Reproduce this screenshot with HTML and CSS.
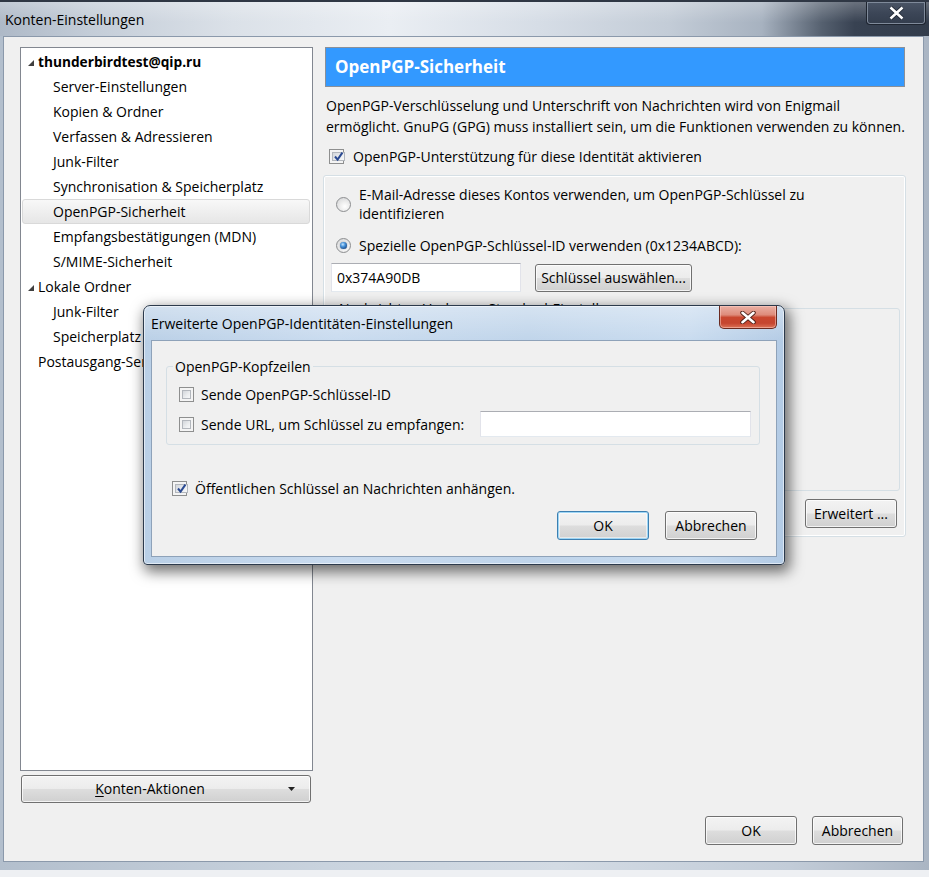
FILE: index.html
```html
<!DOCTYPE html>
<html lang="de">
<head>
<meta charset="utf-8">
<title>Konten-Einstellungen</title>
<link rel="stylesheet" href="styles.css">
</head>
<body>
<div class="win">
  <div class="titlebar">
    <span class="wtitle">Konten-Einstellungen</span>
    <div class="wclose">
      <svg width="17" height="14" viewBox="0 0 17 14"><path d="M2.5 1.5 L14.5 12.5 M14.5 1.5 L2.5 12.5" stroke="#1d2430" stroke-width="4.2"/><path d="M2.5 1.5 L14.5 12.5 M14.5 1.5 L2.5 12.5" stroke="#ffffff" stroke-width="2.6"/></svg>
    </div>
  </div>
  <div class="client">
    <div class="cols">
      <div class="leftcol">
        <div class="tree">
          <div class="row lvl0"><span class="twisty"><svg width="6" height="6" viewBox="0 0 6 6"><polygon points="6,0 6,6 0,6" fill="#3f3f3f"/></svg></span><b>thunderbirdtest@qip.ru</b></div>
          <div class="row lvl1">Server-Einstellungen</div>
          <div class="row lvl1">Kopien &amp; Ordner</div>
          <div class="row lvl1">Verfassen &amp; Adressieren</div>
          <div class="row lvl1">Junk-Filter</div>
          <div class="row lvl1">Synchronisation &amp; Speicherplatz</div>
          <div class="row lvl1 sel">OpenPGP-Sicherheit</div>
          <div class="row lvl1">Empfangsbestätigungen (MDN)</div>
          <div class="row lvl1">S/MIME-Sicherheit</div>
          <div class="row lvl0"><span class="twisty"><svg width="6" height="6" viewBox="0 0 6 6"><polygon points="6,0 6,6 0,6" fill="#3f3f3f"/></svg></span>Lokale Ordner</div>
          <div class="row lvl1">Junk-Filter</div>
          <div class="row lvl1">Speicherplatz</div>
          <div class="row lvl0 leaf">Postausgang-Server (SMTP)</div>
        </div>
        <button class="btn actions"><span class="lbl"><u>K</u>onten-Aktionen</span><span class="drop"><svg width="7" height="4" viewBox="0 0 7 4"><polygon points="0,0 7,0 3.5,4" fill="#222"/></svg></span></button>
      </div>
      <div class="rightcol">
        <div class="header">OpenPGP-Sicherheit</div>
        <p class="desc">OpenPGP-Verschlüsselung und Unterschrift von Nachrichten wird von Enigmail<br>ermöglicht. GnuPG (GPG) muss installiert sein, um die Funktionen verwenden zu können.</p>
        <div class="cbrow main-cb"><span class="cb"><span class="cbi"><svg width="11" height="11" viewBox="0 0 11 11"><path d="M2 5.5 L4.6 8.6 L9.4 1.6" fill="none" stroke="#2b4a92" stroke-width="2"/></svg></span></span><span>OpenPGP-Unterstützung für diese Identität aktivieren</span></div>
        <div class="group">
          <div class="radiorow"><span class="radio"></span><span class="rtext">E-Mail-Adresse dieses Kontos verwenden, um OpenPGP-Schlüssel zu<br>identifizieren</span></div>
          <div class="radiorow second"><span class="radio on"></span><span class="rtext">Spezielle OpenPGP-Schlüssel-ID verwenden (0x1234ABCD):</span></div>
          <div class="keyrow">
            <div class="input keyid">0x374A90DB</div>
            <button class="btn pick">Schlüssel auswählen...</button>
          </div>
          <fieldset class="gbox sub">
            <legend>Nachrichten-Vorlagen: Standard-Einstellungen</legend>
          </fieldset>
          <div class="advrow"><button class="btn adv">Erweitert ...</button></div>
        </div>
      </div>
    </div>
    <div class="footer">
      <button class="btn fbtn ok">OK</button>
      <button class="btn fbtn cancel">Abbrechen</button>
    </div>
  </div>

  <div class="dialog">
    <div class="dtitle">
      <span class="dtitle-text">Erweiterte OpenPGP-Identitäten-Einstellungen</span>
      <div class="dclose">
        <svg width="18" height="13" viewBox="0 0 18 13"><path d="M3.5 1.8 L14.5 11.2 M14.5 1.8 L3.5 11.2" stroke="#4a1c14" stroke-width="4.4" stroke-linecap="round"/><path d="M3.5 1.8 L14.5 11.2 M14.5 1.8 L3.5 11.2" stroke="#ffffff" stroke-width="2.6" stroke-linecap="round"/></svg>
      </div>
    </div>
    <div class="dclient">
      <fieldset class="gbox hdrs">
        <legend>OpenPGP-Kopfzeilen</legend>
        <div class="cbrow drow"><span class="cb"><span class="cbi"></span></span><span>Sende OpenPGP-Schlüssel-ID</span></div>
        <div class="cbrow drow second"><span class="cb"><span class="cbi"></span></span><span>Sende URL, um Schlüssel zu empfangen:</span><div class="input url"></div></div>
      </fieldset>
      <div class="cbrow attach"><span class="cb"><span class="cbi"><svg width="11" height="11" viewBox="0 0 11 11"><path d="M2 5.5 L4.6 8.6 L9.4 1.6" fill="none" stroke="#2b4a92" stroke-width="2"/></svg></span></span><span>Öffentlichen Schlüssel an Nachrichten anhängen.</span></div>
      <div class="dbtns">
        <button class="btn dbtn default">OK</button>
        <button class="btn dbtn">Abbrechen</button>
      </div>
    </div>
  </div>
</div>
</body>
</html>
```

FILE: styles.css
```css
* { box-sizing: border-box; }
html, body { margin: 0; padding: 0; }
body {
  width: 929px;
  height: 877px;
  overflow: hidden;
  background: #eef0f3;
  font-family: "Open Sans", "Noto Sans", sans-serif;
  font-size: 14px;
  color: #000;
}

/* ---------- main window ---------- */
.win {
  position: relative;
  width: 929px;
  height: 870px;
  display: flex;
  flex-direction: column;
  background: linear-gradient(90deg, #b3bfcd 0%, #c9d3de 35%, #d3dbe4 60%, #c2ccd8 85%, #aab5c3 100%);
}
.titlebar {
  height: 36px;
  flex: none;
  display: flex;
  align-items: flex-start;
  padding: 0 3px 0 5px;
  border-top: 2px solid #2f3744;
  background:
    linear-gradient(180deg, rgba(255,255,255,0.25), rgba(255,255,255,0) 60%),
    linear-gradient(90deg, #aeb9c7 0%, #c4cdd8 10%, #dbe1e8 25%, #eaeef3 42%, #d6dde6 58%, #c3ccd7 72%, #a7b2c0 82%, #55606f 88.5%, #384252 92%, #323c4b 100%);
}
.wtitle {
  margin-top: 8px;
  line-height: 20px;
  font-size: 14px;
  color: #000;
}
.wclose {
  margin-left: auto;
  width: 60px;
  height: 23px;
  border: 1px solid #1e2530;
  border-top: none;
  border-radius: 0 0 4px 4px;
  background: linear-gradient(180deg, #4a5566 0%, #3c4657 50%, #333d4d 100%);
  box-shadow: inset 0 0 0 1px #7f8a9a;
  display: flex;
  align-items: center;
  justify-content: center;
}

.client {
  flex: 1;
  margin: 0 5px 8px 3px;
  background: #f0f0f0;
  border: 1px solid #8b99ab;
  padding: 10px 17px 16px 16px;
  display: flex;
  flex-direction: column;
}
.cols {
  display: flex;
  gap: 10px;
  height: 756px;
  flex: none;
}

/* ---------- left column ---------- */
.leftcol {
  width: 293px;
  display: flex;
  flex-direction: column;
}
.tree {
  height: 724px;
  background: #fff;
  border: 1px solid #828790;
  padding-top: 1px;
}
.row {
  height: 25px;
  margin: 0 2px 0 1px;
  border: 1px solid transparent;
  border-radius: 3px;
  display: flex;
  align-items: center;
  white-space: nowrap;
  font-size: 14px;
}
.row.lvl0 { padding-left: 5px; }
.row.lvl0.leaf { padding-left: 15px; }
.row.lvl1 { padding-left: 30px; }
.row.sel {
  background: linear-gradient(180deg, #f8f8f8 0%, #e6e6e6 100%);
  border-color: #d9d9d9;
}
.twisty {
  width: 6px;
  height: 6px;
  margin-right: 4px;
  display: flex;
  margin-top: 2px;
}
.twisty svg { display: block; }
.row b { font-weight: 700; font-size: 13.7px; }

/* ---------- buttons ---------- */
.btn {
  font-family: inherit;
  font-size: 14px;
  color: #000;
  border: 1px solid #707070;
  border-radius: 3px;
  background: linear-gradient(180deg, #f3f3f3 0%, #ececec 48%, #dddddd 52%, #d0d0d0 100%);
  box-shadow: inset 0 0 0 1px rgba(255,255,255,0.75);
  padding: 0;
  line-height: 20px;
  cursor: default;
}
.actions {
  margin: 4px 2px 0 1px;
  height: 28px;
  display: flex;
  align-items: center;
}
.actions .lbl {
  flex: 1;
  text-align: center;
  padding-left: 2px;
}
.actions .lbl u { text-underline-offset: 2px; }
.actions .drop {
  width: 34px;
  display: flex;
  justify-content: center;
  padding-right: 4px;
}
.actions .drop svg { display: block; }

/* ---------- right column ---------- */
.rightcol {
  width: 583px;
  display: flex;
  flex-direction: column;
}
.header {
  margin: 0 1px 0 2px;
  height: 40px;
  flex: none;
  background: #3399ff;
  border: 1px solid #8a9099;
  color: #fff;
  font-weight: 700;
  font-size: 17px;
  line-height: 37px;
  padding-left: 9px;
}
.desc {
  margin: 8px 0 0 3px;
  line-height: 21px;
  white-space: nowrap;
}
.cbrow {
  display: flex;
  align-items: center;
  white-space: nowrap;
}
.main-cb {
  margin: 8px 0 0 6px;
  height: 22px;
  gap: 9px;
}
.cb {
  width: 15px;
  height: 15px;
  flex: none;
  border: 1px solid #8e8f8f;
  background: #f4f4f4;
  padding: 2px;
  display: flex;
}
.cbi {
  flex: 1;
  border: 1px solid #b3b7bd;
  background: linear-gradient(135deg, #d3d6db 0%, #eceef0 60%, #f7f8f9 100%);
  display: flex;
  align-items: center;
  justify-content: center;
  overflow: visible;
}
.cbi svg { display: block; flex: none; }

.group {
  margin-top: 8px;
  border: 1px solid #d5dfe5;
  border-radius: 3px;
  box-shadow: inset 0 0 0 1px #ffffff;
  padding: 9px 5px 8px 7px;
  display: flex;
  flex-direction: column;
}
.radiorow {
  display: flex;
  align-items: center;
  gap: 8px;
  padding-left: 5px;
  line-height: 19px;
  white-space: nowrap;
}
.radiorow.second { margin-top: 13px; }
.radio {
  width: 15px;
  height: 15px;
  flex: none;
  border-radius: 50%;
  border: 1px solid #8c8e90;
  background: radial-gradient(circle at 60% 65%, #ffffff 0%, #f0f0f0 35%, #cfd0d2 100%);
  display: flex;
  align-items: center;
  justify-content: center;
}
.radio.on::after {
  content: "";
  width: 7px;
  height: 7px;
  border-radius: 50%;
  background: radial-gradient(circle at 40% 35%, #c6e6ff 0%, #4a95dc 35%, #123f7c 85%);
  box-shadow: 0 0 1px #0d2a55;
}
.keyrow {
  margin-top: 8px;
  display: flex;
  align-items: center;
}
.input {
  background: #fff;
  border: 1px solid;
  border-color: #abadb3 #e2e3ea #e3e9ef #e2e3ea;
}
.keyid {
  width: 190px;
  height: 29px;
  padding-left: 5px;
  line-height: 27px;
}
.pick {
  margin-left: 14px;
  width: 157px;
  height: 28px;
}

.gbox {
  margin: 0;
  min-width: 0;
  border: 1px solid #d5dfe5;
  border-radius: 3px;
  padding: 0;
}
.gbox legend {
  padding: 0 2px;
  line-height: 19px;
  background: #f0f0f0;
}
.sub {
  margin: 7px 0 0 -1px;
  height: 192px;
}
.sub legend { margin-left: 6px; }
.advrow {
  margin-top: 8px;
  display: flex;
  justify-content: flex-end;
}
.adv {
  width: 92px;
  height: 29px;
  margin-right: 3px;
}

.footer {
  margin-top: 13px;
  display: flex;
  justify-content: flex-end;
  gap: 15px;
  padding-right: 3px;
}
.fbtn { height: 29px; }
.fbtn.ok { width: 92px; }
.fbtn.cancel { width: 91px; }

/* ---------- dialog (overlay) ---------- */
.dialog {
  position: absolute;
  left: 143px;
  top: 305px;
  width: 642px;
  height: 260px;
  border: 1px solid #2c3a4c;
  border-radius: 7px 7px 4px 4px;
  background:
    linear-gradient(180deg, rgba(255,255,255,0.35) 0%, rgba(255,255,255,0) 14%),
    linear-gradient(90deg, #b9cfe6 0%, #c9dbef 30%, #bfd4ea 60%, #c8dbef 85%, #b3cbe5 100%);
  box-shadow: 3px 5px 14px 2px rgba(0,0,0,0.55), inset 0 0 0 1px rgba(255,255,255,0.55);
  display: flex;
  flex-direction: column;
}
.dtitle {
  height: 34px;
  flex: none;
  display: flex;
  align-items: flex-start;
  padding-left: 7px;
}
.dtitle-text {
  margin-top: 8px;
  line-height: 20px;
}
.dclose {
  margin-left: auto;
  margin-right: 7px;
  width: 58px;
  height: 23px;
  border: 1px solid #6a2a20;
  border-top: none;
  border-radius: 0 0 5px 5px;
  background: linear-gradient(180deg, #eab0a4 0%, #de8c7b 40%, #c9472f 52%, #c5452f 78%, #dc7357 100%);
  box-shadow: inset 0 0 0 1px rgba(255,210,200,0.5);
  display: flex;
  align-items: center;
  justify-content: center;
}
.dclient {
  margin: 0 7px;
  height: 217px;
  background: #f0f0f0;
  border: 1px solid #8ea2b9;
  padding: 16px 16px 0 14px;
  display: flex;
  flex-direction: column;
}
.hdrs {
  padding: 5px 8px 7px 12px;
}
.hdrs legend { margin-left: -6px; }
.drow {
  height: 26px;
  gap: 7px;
}
.drow.second { margin-top: 4px; }
.url {
  margin-left: auto;
  width: 271px;
  height: 26px;
}
.attach {
  margin: 30px 0 0 6px;
  height: 26px;
  gap: 8px;
}
.dbtns {
  margin-top: 10px;
  display: flex;
  justify-content: flex-end;
  gap: 16px;
  padding-right: 3px;
}
.dbtn {
  width: 92px;
  height: 29px;
}
.dbtn.default {
  border-color: #3c7fb1;
  box-shadow: inset 0 0 0 1px #9fd6f5, inset 0 0 0 2px rgba(255,255,255,0.5);
}
```
